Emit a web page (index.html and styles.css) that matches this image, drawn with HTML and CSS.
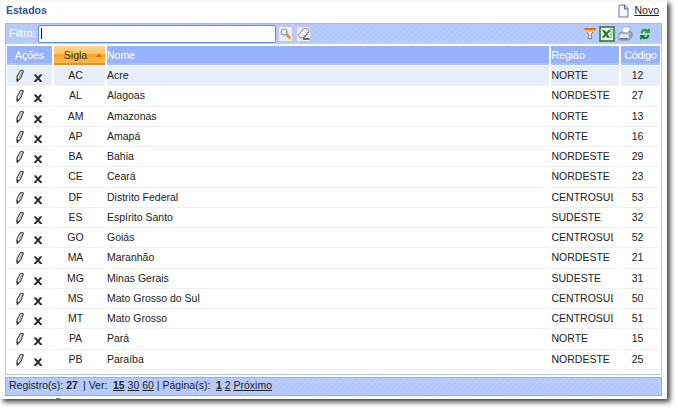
FILE: index.html
```html
<!DOCTYPE html>
<html lang="pt-BR">
<head>
<meta charset="utf-8">
<title>Estados</title>
<link rel="stylesheet" href="styles.css">
</head>
<body>
<svg class="defs" width="0" height="0">
  <symbol id="pencil" viewBox="0 0 10 14"><path d="M2 7.8 5.2 2Q6.7 .6 8.4 2.2L5.7 9 2.6 12Z" fill="#fafafa" stroke="#4b4b4b" stroke-width="1.2"/><path d="M6.8 2.8 4 8.6" stroke="#888" stroke-width=".8"/><path d="M1.4 9 3.6 10.4 1.8 13.2Z" fill="#222"/></symbol>
  <symbol id="cross" viewBox="0 0 10 10"><path d="M1 2H3M7 2H9M1 8.4H3M7 8.4H9" stroke="#2b2b2b" stroke-width="1.2"/><path d="M2.2 2 7.8 8.4M7.8 2 2.2 8.4" stroke="#2b2b2b" stroke-width="1.9"/></symbol>
</svg>
<main class="window">
  <header class="title">
    <h1>Estados</h1>
    <a class="new"><svg width="11" height="14" viewBox="0 0 11 14"><path d="M1 1H7L10 4.5V13H1Z" fill="#f3f7fd" stroke="#62799b"/><path d="M6.5 1V5H10" fill="#cbd9ec" stroke="#536a8d"/></svg><span>Novo</span></a>
  </header>
  <section class="toolbar">
    <label for="filter">Filtro:</label>
    <div class="field" id="filter"><i class="caret"></i></div>
    <button class="tool"><svg width="14" height="14" viewBox="0 0 14 14"><path d="M8 8 10.5 10.5" stroke="#dc963f" stroke-width="3" stroke-linecap="round"/><circle cx="5.2" cy="5" r="3" fill="#e4f1f4" stroke="#8796a1" stroke-width="1.1"/><path d="M3.7 5Q4 3.5 5.5 3.5" fill="none" stroke="#fff"/></svg></button>
    <button class="tool"><svg width="14" height="14" viewBox="0 0 14 14"><path d="M6.2 1.8H11L12 4 7.8 10.3 3.2 10.7 1.4 8.2Z" fill="#f8fbff" stroke="#6d87aa"/><path d="M11.9 4.3 7.7 10.2 6.8 8.2" fill="none" stroke="#7890ac" stroke-width="1.3"/><path d="M6 12H12.5" stroke="#222" stroke-width="1.3"/></svg></button>
    <div class="actions">
      <svg width="12" height="13" viewBox="0 0 12 13"><path d="M.7 1.5H11.3L7.3 7V11.8H4.7V7Z" fill="#faf4e5" stroke="#777"/><path d="M0 1H12L11 3H1Z" fill="#ed6329"/><path d="M1 3H11L9.5 5H2.5Z" fill="#ffc52d"/></svg>
      <svg width="16" height="16" viewBox="0 0 16 16"><rect x="1" y="1" width="14" height="14" fill="#eaf4e7" stroke="#3d8140" stroke-width="1.7"/><path d="M11 3.5H13.5M11 6H13.5M11 8.5H13.5M11 11H13.5" stroke="#75a575"/><path d="M3 4.2H5.8L11 11.8H8.2Z" fill="#226b2a"/><path d="M10.8 4.2 3.6 11.8" stroke="#347d38" stroke-width="2"/></svg>
      <svg width="15" height="15" viewBox="0 0 15 15"><path d="M5.5 1H12.5L10.5 7H3.5Z" fill="#fff" stroke="#a5b0c2"/><path d="M1 7.5 4 5.8H13L14 7V11L10.5 14H1Z" fill="#a9b4bf" stroke="#7d8b9a"/><path d="M4.5 5.8 5.8 2H11.5L10 6.5Z" fill="#fff"/><path d="M1.5 8.2H10.5V12H1.5Z" fill="#e9eef2"/><path d="M2 12.8H10" stroke="#657382" stroke-width="1.2"/><path d="M11.5 9.5H13" stroke="#46d044" stroke-width="1.6"/></svg>
      <svg width="12" height="14" viewBox="0 0 12 14"><path d="M2.6 6.2Q3 3.2 5.5 3H8" fill="none" stroke="#16a621" stroke-width="2"/><path d="M6.8 4 10.8 1V6H6Z" fill="#16a621"/><path d="M9.4 7.8Q9 10.8 6.5 11H4" fill="none" stroke="#078b15" stroke-width="2"/><path d="M5.2 10 1.2 13V8H6Z" fill="#078b15"/></svg>
    </div>
  </section>
  <section class="table">
    <div class="row head"><span>Ações</span><span class="sorted">Sigla<i class="arrow"></i></span><span>Nome</span><span>Região</span><span>Código</span></div>
    <div class="row selected"><span><svg class="pencil"><use href="#pencil"/></svg><svg class="cross"><use href="#cross"/></svg></span><span>AC</span><span>Acre</span><span><b>NORTE</b></span><span>12</span></div>
    <div class="row"><span><svg class="pencil"><use href="#pencil"/></svg><svg class="cross"><use href="#cross"/></svg></span><span>AL</span><span>Alagoas</span><span><b>NORDESTE</b></span><span>27</span></div>
    <div class="row"><span><svg class="pencil"><use href="#pencil"/></svg><svg class="cross"><use href="#cross"/></svg></span><span>AM</span><span>Amazonas</span><span><b>NORTE</b></span><span>13</span></div>
    <div class="row"><span><svg class="pencil"><use href="#pencil"/></svg><svg class="cross"><use href="#cross"/></svg></span><span>AP</span><span>Amapá</span><span><b>NORTE</b></span><span>16</span></div>
    <div class="row"><span><svg class="pencil"><use href="#pencil"/></svg><svg class="cross"><use href="#cross"/></svg></span><span>BA</span><span>Bahia</span><span><b>NORDESTE</b></span><span>29</span></div>
    <div class="row"><span><svg class="pencil"><use href="#pencil"/></svg><svg class="cross"><use href="#cross"/></svg></span><span>CE</span><span>Ceará</span><span><b>NORDESTE</b></span><span>23</span></div>
    <div class="row"><span><svg class="pencil"><use href="#pencil"/></svg><svg class="cross"><use href="#cross"/></svg></span><span>DF</span><span>Distrito Federal</span><span><b>CENTROSUL</b></span><span>53</span></div>
    <div class="row"><span><svg class="pencil"><use href="#pencil"/></svg><svg class="cross"><use href="#cross"/></svg></span><span>ES</span><span>Espírito Santo</span><span><b>SUDESTE</b></span><span>32</span></div>
    <div class="row"><span><svg class="pencil"><use href="#pencil"/></svg><svg class="cross"><use href="#cross"/></svg></span><span>GO</span><span>Goiás</span><span><b>CENTROSUL</b></span><span>52</span></div>
    <div class="row"><span><svg class="pencil"><use href="#pencil"/></svg><svg class="cross"><use href="#cross"/></svg></span><span>MA</span><span>Maranhão</span><span><b>NORDESTE</b></span><span>21</span></div>
    <div class="row"><span><svg class="pencil"><use href="#pencil"/></svg><svg class="cross"><use href="#cross"/></svg></span><span>MG</span><span>Minas Gerais</span><span><b>SUDESTE</b></span><span>31</span></div>
    <div class="row"><span><svg class="pencil"><use href="#pencil"/></svg><svg class="cross"><use href="#cross"/></svg></span><span>MS</span><span>Mato Grosso do Sul</span><span><b>CENTROSUL</b></span><span>50</span></div>
    <div class="row"><span><svg class="pencil"><use href="#pencil"/></svg><svg class="cross"><use href="#cross"/></svg></span><span>MT</span><span>Mato Grosso</span><span><b>CENTROSUL</b></span><span>51</span></div>
    <div class="row"><span><svg class="pencil"><use href="#pencil"/></svg><svg class="cross"><use href="#cross"/></svg></span><span>PA</span><span>Pará</span><span><b>NORTE</b></span><span>15</span></div>
    <div class="row"><span><svg class="pencil"><use href="#pencil"/></svg><svg class="cross"><use href="#cross"/></svg></span><span>PB</span><span>Paraíba</span><span><b>NORDESTE</b></span><span>25</span></div>
  </section>
  <footer class="pager">
    <span class="count">Registro(s): <strong>27</strong></span>
    <span class="view">| Ver:</span>
    <span class="sizes"><a><strong>15</strong></a> <a>30</a> <a>60</a> | Página(s):</span>
    <span class="pages"><a><strong>1</strong></a> <a>2</a> <a>Próximo</a></span>
  </footer>
  <i class="mark"></i>
</main>
</body>
</html>
```
FILE: styles.css
```css
* { box-sizing: border-box; }
body { margin: 0; height: 410px; overflow: hidden; background: #fff; font: 10.5px/14px "Liberation Sans", Arial, sans-serif; color: #222; }
.defs { position: absolute; }
.window { width: 667px; height: 399px; padding: 2px 5px 0; overflow: hidden; background: linear-gradient(#f8f8f8 0 2px, #fff 2px); box-shadow: 3px 3px 5px 0 rgba(0,0,0,.75); }
.title { height: 21px; display: flex; justify-content: space-between; padding: 1px 3px 0 1px; }
.title h1 { margin: 0; font-size: 10.5px; line-height: 14px; color: #2f5593; }
.new { display: flex; gap: 5px; text-decoration: underline; }
.new svg { margin-top: 1px; }
.toolbar, .pager { width: 657px; border: 1px solid #a5bfe3; background: repeating-linear-gradient(135deg, #b3c8fc 0 2px, #b8ccff 2px 4px); }
.toolbar { height: 21px; display: flex; align-items: center; border-bottom-color: #c5d4eb; }
.toolbar label { width: 32px; padding: 0 0 2px 3px; color: #fff; }
.field { width: 238px; height: 18px; margin-right: 2px; border: 1px solid #5690ed; border-radius: 2px; background: #fff; padding: 2px; }
.caret { display: block; width: 1px; height: 11px; background: #000; }
.tool { width: 15px; height: 16px; margin-right: 3px; padding: 0; border: 1px solid #c9c4df; background: #eeeef1; overflow: hidden; }
.tool svg { display: block; }
.actions { margin-left: auto; padding-right: 10px; display: flex; align-items: center; gap: 3px; }
.actions svg:last-child { margin-left: 3px; }
.table { width: 657px; height: 331px; padding: 2px 1px 0; border: solid #b5cbe3; border-width: 0 1px 1px; }
.row { height: 20.25px; display: grid; grid-template-columns: 45px 51px 442px 68px 39px; gap: 2px; }
.row > span { padding-top: 2px; border-bottom: 1px solid #edf2f9; white-space: nowrap; overflow: hidden; }
.row > span:nth-child(1) { padding: 3px 0 0 8px; display: flex; }
.row > span:nth-child(2), .row > span:nth-child(5) { text-align: center; }
.row > span:nth-child(2) { padding-right: 8px; }
.row > span:nth-child(5) { padding-right: 6px; }
.selected > span { background: #e7eef9; }
.row b { display: block; width: 61px; overflow: hidden; font-weight: normal; }
.row > span:nth-child(4) { padding-left: .5px; }
.pencil { width: 10px; height: 14px; }
.cross { width: 10px; height: 10px; margin: 4px 0 0 8px; }
.head { height: 20px; padding-bottom: 1px; color: #fff; }
.head > span { background: #97b3fe; border-bottom: 2px solid #a9c4ee; }
.head > span:nth-child(1) { display: block; padding: 2px 0 0; text-align: center; }
.head > span:nth-child(5) { padding-right: 0; padding-left: 0; letter-spacing: -.1px; }
.head .sorted { padding-right: 4px; position: relative; color: #333; background: linear-gradient(#ffd591, #ffc66a 48%, #fba426 50%, #ffb84a); border-bottom-color: #d9953b; }
.arrow { position: absolute; right: 3px; top: 7px; border: solid transparent; border-width: 0 3.5px 4px; border-bottom-color: #c78028; }
.pager { height: 19px; margin-top: 2px; padding: 0 3px; display: flex; white-space: pre; border-color: #94afd8; }
.pager a { text-decoration: underline; }
.count { width: 74px; }
.view { width: 30px; }
.sizes { width: 103px; }
.mark { display: block; width: 4px; height: 1px; margin: 2px 0 0 51px; background: #777; }
```
